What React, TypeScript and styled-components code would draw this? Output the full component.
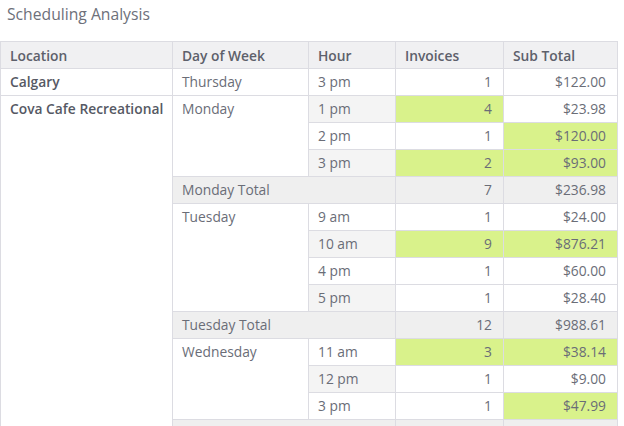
import React, { FC } from "react";
import styled, { createGlobalStyle } from "styled-components";

const GlobalStyle = createGlobalStyle`
  html, body {
    margin: 0;
    padding: 0;
    background: #ffffff;
  }
  body {
    font-family: "Open Sans", "Liberation Sans", sans-serif;
    color: #666873;
  }
`;

const Page = styled.div`
  width: 624px;
  height: 426px;
  overflow: hidden;
`;

const Title = styled.h2`
  margin: 0;
  padding: 2px 0 0 7px;
  height: 41px;
  box-sizing: border-box;
  font-size: 15.7px;
  line-height: 24px;
  font-weight: 400;
  color: #6d707a;
`;

const Table = styled.table`
  border-collapse: collapse;
  table-layout: fixed;
  width: 617px;
  font-size: 13.8px;
`;

const Th = styled.th`
  height: 26px;
  padding: 0 9px;
  background: #f0f0f2;
  border: 1px solid #dcdce2;
  text-align: left;
  font-weight: 600;
  color: #5d606b;
`;

type CellTone = "plain" | "stripe" | "total" | "hot";

const toneBg: Record<CellTone, string> = {
  plain: "#ffffff",
  stripe: "#f4f4f4",
  total: "#efefef",
  hot: "#d9f28b",
};

const Td = styled.td<{ $tone?: CellTone; $num?: boolean; $strong?: boolean }>`
  height: 26px;
  padding: 0 ${(p) => (p.$num ? "11px" : "9px")} 0 9px;
  border: 1px solid #dcdce2;
  vertical-align: top;
  line-height: 26px;
  white-space: nowrap;
  text-align: ${(p) => (p.$num ? "right" : "left")};
  background: ${(p) => toneBg[p.$tone ?? "plain"]};
  font-weight: ${(p) => (p.$strong ? 600 : 400)};
  color: ${(p) => (p.$strong ? "#565964" : "#6a6d77")};
`;

type HourRow = { hour: string; inv: number; sub: string; hotInv?: boolean; hotSub?: boolean };
type DayGroup = { day: string; rows: HourRow[]; totalInv?: number; totalSub?: string };
type Loc = { name: string; days: DayGroup[] };

const data: Loc[] = [
  {
    name: "Calgary",
    days: [{ day: "Thursday", rows: [{ hour: "3 pm", inv: 1, sub: "$122.00" }] }],
  },
  {
    name: "Cova Cafe Recreational",
    days: [
      {
        day: "Monday",
        rows: [
          { hour: "1 pm", inv: 4, sub: "$23.98", hotInv: true },
          { hour: "2 pm", inv: 1, sub: "$120.00", hotSub: true },
          { hour: "3 pm", inv: 2, sub: "$93.00", hotInv: true, hotSub: true },
        ],
        totalInv: 7,
        totalSub: "$236.98",
      },
      {
        day: "Tuesday",
        rows: [
          { hour: "9 am", inv: 1, sub: "$24.00" },
          { hour: "10 am", inv: 9, sub: "$876.21", hotInv: true, hotSub: true },
          { hour: "4 pm", inv: 1, sub: "$60.00" },
          { hour: "5 pm", inv: 1, sub: "$28.40" },
        ],
        totalInv: 12,
        totalSub: "$988.61",
      },
      {
        day: "Wednesday",
        rows: [
          { hour: "11 am", inv: 3, sub: "$38.14", hotInv: true, hotSub: true },
          { hour: "12 pm", inv: 1, sub: "$9.00" },
          { hour: "3 pm", inv: 1, sub: "$47.99", hotSub: true },
        ],
        totalInv: 5,
        totalSub: "$95.13",
      },
    ],
  },
];

const locSpan = (l: Loc) =>
  l.days.reduce((n, d) => n + d.rows.length + (d.totalSub ? 1 : 0), 0);

const App: FC = () => {
  const body: React.ReactNode[] = [];
  let hourIdx = 0;

  data.forEach((loc) => {
    let firstOfLoc = true;
    loc.days.forEach((d) => {
      d.rows.forEach((r, i) => {
        body.push(
          <tr key={`${loc.name}-${d.day}-${r.hour}`}>
            {firstOfLoc && (
              <Td rowSpan={locSpan(loc)} $strong>
                {loc.name}
              </Td>
            )}
            {i === 0 && <Td rowSpan={d.rows.length}>{d.day}</Td>}
            <Td $tone={hourIdx % 2 === 1 ? "stripe" : "plain"}>{r.hour}</Td>
            <Td $num $tone={r.hotInv ? "hot" : "plain"}>{r.inv}</Td>
            <Td $num $tone={r.hotSub ? "hot" : "plain"}>{r.sub}</Td>
          </tr>
        );
        hourIdx++;
        firstOfLoc = false;
      });
      if (d.totalSub) {
        body.push(
          <tr key={`${loc.name}-${d.day}-total`}>
            <Td colSpan={2} $tone="total">{d.day} Total</Td>
            <Td $num $tone="total">{d.totalInv}</Td>
            <Td $num $tone="total">{d.totalSub}</Td>
          </tr>
        );
      }
    });
  });

  return (
    <Page>
      <GlobalStyle />
      <Title>Scheduling Analysis</Title>
      <Table>
        <colgroup>
          <col style={{ width: 172 }} />
          <col style={{ width: 136 }} />
          <col style={{ width: 87 }} />
          <col style={{ width: 108 }} />
          <col style={{ width: 114 }} />
        </colgroup>
        <thead>
          <tr>
            <Th>Location</Th>
            <Th>Day of Week</Th>
            <Th>Hour</Th>
            <Th>Invoices</Th>
            <Th>Sub Total</Th>
          </tr>
        </thead>
        <tbody>{body}</tbody>
      </Table>
    </Page>
  );
};

export default App;
